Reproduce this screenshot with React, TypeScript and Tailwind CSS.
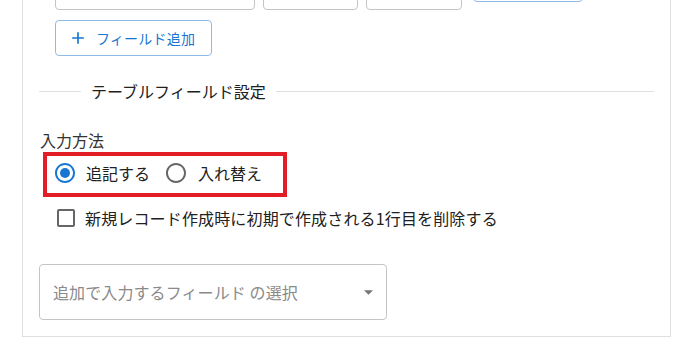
import React from 'react'

const font = { fontFamily: '"Noto Sans CJK JP", "Noto Sans", sans-serif' }

function RadioIcon({ checked }: { checked: boolean }) {
  return (
    <svg viewBox="0 0 24 24" className={checked ? 'h-6 w-6 fill-[#1976d2]' : 'h-6 w-6 fill-[#666666]'}>
      <path d="M12 2C6.48 2 2 6.48 2 12s4.48 10 10 10 10-4.48 10-10S17.52 2 12 2zm0 18c-4.42 0-8-3.58-8-8s3.58-8 8-8 8 3.58 8 8-3.58 8-8 8z" />
      {checked && <circle cx="12" cy="12" r="5" />}
    </svg>
  )
}

export default function App() {
  return (
    <div className="h-[351px] w-[698px] overflow-hidden bg-white text-[#212121]" style={font}>
      <div className="ml-[22px] w-[649px] border-x border-b border-[#e0e0e0] px-4 pb-4">
        {/* field row (scrolled partly out of view) */}
        <div className="-mt-[30px] flex items-start pl-4">
          <div className="h-10 w-[200px] rounded-[4px] border border-[#c4c4c4]" />
          <div className="ml-[8px] h-10 w-[95px] rounded-[4px] border border-[#c4c4c4]" />
          <div className="ml-[8px] h-10 w-[96px] rounded-[4px] border border-[#c4c4c4]" />
          <div className="-mt-[4px] ml-[11px] h-9 w-[110px] rounded-[4px] border border-[#8fbbe8]" />
        </div>

        <div className="mt-[10px] pl-4">
          <button className="flex h-9 w-[157px] items-center rounded-[4px] border border-[#8fbbe8] pl-[12px] text-[14px] text-[#1976d2]">
            <svg viewBox="0 0 24 24" className="h-5 w-5 fill-[#1976d2]">
              <path d="M19 13h-6v6h-2v-6H5v-2h6V5h2v6h6v2z" />
            </svg>
            <span className="ml-2 leading-none tracking-[0.2px]">フィールド追加</span>
          </button>
        </div>

        <div className="mt-[23px] flex h-6 items-center">
          <div className="h-px w-[42px] bg-[#e0e0e0]" />
          <span className="px-[10px] text-[16px] leading-6 text-[#212121]">テーブルフィールド設定</span>
          <div className="h-px flex-1 bg-[#e0e0e0]" />
        </div>

        <div className="mt-[25px] pl-px text-[16px] leading-[24px] text-[#333333]">入力方法</div>

        <div className="ml-[4px] flex h-[45px] w-[244px] items-center border-4 border-[#e31d25] pb-[3px] pl-[6px]">
          <label className="flex items-center">
            <RadioIcon checked />
            <span className="ml-[9px] text-[16px] leading-6">追記する</span>
          </label>
          <label className="ml-[14px] flex items-center">
            <RadioIcon checked={false} />
            <span className="ml-[10px] text-[16px] leading-6">入れ替え</span>
          </label>
        </div>

        <label className="mt-[9px] ml-[15px] flex h-6 items-center">
          <svg viewBox="0 0 24 24" className="h-6 w-6 fill-[#666666]">
            <path d="M19 5v14H5V5h14m0-2H5c-1.11 0-2 .9-2 2v14c0 1.1.89 2 2 2h14c1.1 0 2-.9 2-2V5c0-1.1-.9-2-2-2z" />
          </svg>
          <span className="ml-[7px] text-[16px] leading-6 tracking-[0.15px]">新規レコード作成時に初期で作成される1行目を削除する</span>
        </label>

        <div className="mt-[34px] flex h-14 w-[348px] items-center rounded-[4px] border border-[#c4c4c4] pl-[13px] pr-[13px]">
          <span className="flex-1 text-[16px] text-[#8a8a8a] tracking-[0.1px]">追加で入力するフィールド の選択</span>
          <svg viewBox="0 0 10 5" className="h-[5px] w-[9px] fill-[#757575]">
            <path d="M0 0l5 5 5-5z" />
          </svg>
        </div>
      </div>
    </div>
  )
}
